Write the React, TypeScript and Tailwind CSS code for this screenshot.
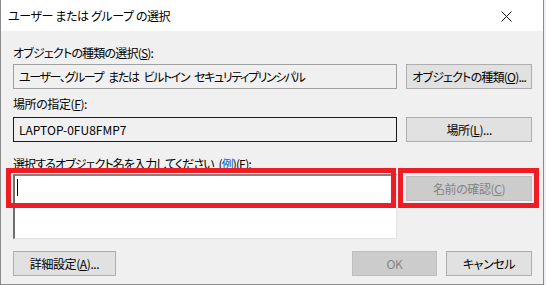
import React from 'react';

const font = "font-['Meiryo_UI','Noto_Sans_CJK_JP',sans-serif] [font-feature-settings:'palt'] tracking-[-0.4px]";

function Btn({ children, w, disabled }: { children: React.ReactNode; w: string; disabled?: boolean }) {
  return (
    <div
      className={`${w} h-[25px] flex items-center justify-center border text-[12px] whitespace-nowrap ${
        disabled ? 'bg-[#cccccc] border-[#bfbfbf] text-[#838383]' : 'bg-[#e1e1e1] border-[#adadad] text-[#000000]'
      }`}
    >
      {children}
    </div>
  );
}

export default function App() {
  return (
    <div className={`w-[546px] h-[285px] bg-[#eef0f4] ${font}`}>
      <div className="relative w-[544px] h-[285px] bg-[#f0f0f0] border-l border-r border-b border-[#8c8c8c] text-[#000000]">
        {/* title bar */}
        <div className="h-[31px] bg-white flex items-center justify-between pl-[7px] pr-[31px]">
          <span className="text-[12px]">ユーザー または グループ の選択</span>
          <svg width="11" height="11" viewBox="0 0 11 11" className="mt-[1px]">
            <path d="M0.5 0.5 L10.5 10.5 M10.5 0.5 L0.5 10.5" stroke="#111" strokeWidth="1" fill="none" />
          </svg>
        </div>

        <div className="pl-[12px] pr-[11px]">
          <div className="mt-[14px] h-[16px] leading-[16px] text-[12px] tracking-[-0.8px]">
            オブジェクトの種類の選択(<span className="underline">S</span>):
          </div>
          <div className="mt-[3px] flex gap-[9px]">
            <div className="w-[385px] h-[25px] border border-[#a0a0a0] bg-[#f0f0f0] flex items-center gap-[5px] pl-[5px] text-[12px] tracking-[-1.4px] whitespace-nowrap">
              <span>ユーザー、グループ</span>
              <span>または</span>
              <span>ビルトイン</span>
              <span>セキュリティプリンシパル</span>
            </div>
            <Btn w="w-[126px]">
              <span className="tracking-[-0.8px]">
                オブジェクトの種類(<span className="underline">O</span>)...
              </span>
            </Btn>
          </div>

          <div className="mt-[7px] h-[16px] leading-[16px] text-[12px]">
            場所の指定(<span className="underline">F</span>):
          </div>
          <div className="mt-[5px] flex gap-[9px]">
            <div className="w-[385px] h-[25px] border border-[#1a1a1a] bg-[#f0f0f0] flex items-center pl-[5px] text-[12px] tracking-[0px]">
              LAPTOP-0FU8FMP7
            </div>
            <Btn w="w-[126px]">
              場所(<span className="underline">L</span>)...
            </Btn>
          </div>

          <div className="mt-[14px] h-[16px] leading-[16px] text-[12px] tracking-[-0.9px]">
            選択するオブジェクト名を入力してください <span className="ml-[3px]">(</span><span className="text-[#0066cc]">例</span>)(E):
          </div>
          <div className="mt-[2px] flex gap-[9px] items-start">
            <div className="w-[384px] h-[65px] bg-white border-t-2 border-l-2 border-t-[#828282] border-l-[#6e6e6e] border-r border-b border-r-[#e3e3e3] border-b-[#e3e3e3] pl-[2px] pt-[3px]">
              <div className="w-[1px] h-[17px] bg-[#000000]" />
            </div>
            <div className="mt-[2px]">
              <Btn w="w-[126px]" disabled>
                名前の確認(<span className="underline">C</span>)
              </Btn>
            </div>
          </div>

          <div className="mt-[12px] flex">
            <Btn w="w-[103px]">
              詳細設定(<span className="underline">A</span>)...
            </Btn>
            <div className="ml-auto flex gap-[9px]">
              <Btn w="w-[85px]" disabled>
                OK
              </Btn>
              <Btn w="w-[86px]">キャンセル</Btn>
            </div>
          </div>
        </div>

        {/* red highlight frames */}
        <div className="absolute left-[5px] top-[168px] w-[390px] h-[40px] border-[5px] border-[#ee1c24]" />
        <div className="absolute left-[397px] top-[168px] w-[141px] h-[40px] border-[5px] border-[#ee1c24]" />
      </div>
    </div>
  );
}
